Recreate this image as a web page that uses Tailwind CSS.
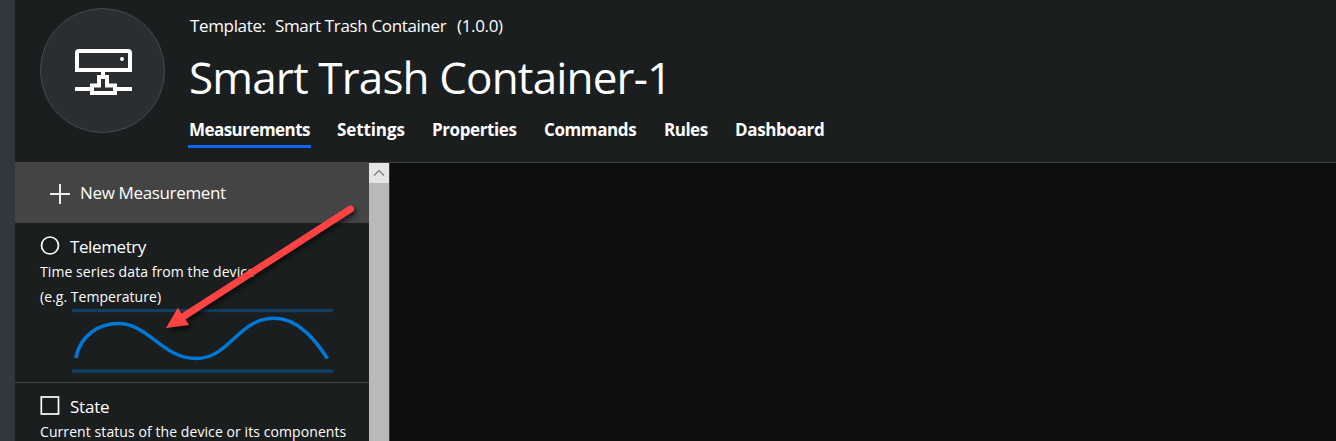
<!DOCTYPE html>
<html lang="en">
<head>
<meta charset="utf-8">
<title>Smart Trash Container-1</title>
<script src="https://cdn.jsdelivr.net/npm/@tailwindcss/browser@4"></script>
</head>
<body class="w-[1336px] h-[441px] overflow-hidden bg-[#1a1e1f] text-white font-['Open_Sans','Noto_Sans',sans-serif]">
<div class="relative flex w-[1336px] h-[441px] overflow-hidden">
  <div class="w-[15px] shrink-0 bg-[#31373f]"></div>
  <div class="flex flex-col flex-1">
    <header class="flex h-[163px] shrink-0 border-b border-[#444] pl-[25px] pt-2">
      <div class="flex size-[125px] shrink-0 rounded-full border border-[#4a4a4a] bg-[#2b2e30]">
        <svg class="mt-[36px] ml-[31px]" width="62" height="54" viewBox="72 45 62 54" fill="none" stroke="#fff" stroke-width="4">
          <path d="M77 70V53Q77 51 79 51H128Q130 51 130 53V70Z"/>
          <path d="M75 89H92M115 89H132M103 71V77"/>
          <path d="M92 93V85.500H99V77H107V85.500H115V93Z"/>
          <circle cx="122" cy="59" r="2" fill="#fff" stroke="none"/>
        </svg>
      </div>
      <div class="flex flex-col ml-[24px] whitespace-nowrap">
        <div class="flex h-6 mt-[6px] text-[17px] leading-6 tracking-[-0.35px]">
          <span class="w-[85px] pl-px">Template:</span><span class="w-[183px] pl-px">Smart Trash Container</span><span>(1.0.0)</span>
        </div>
        <h1 class="mt-[9px] h-[60px] text-[44px] leading-[60px] font-normal tracking-[-0.85px]">Smart Trash Container-1</h1>
        <nav class="flex mt-[9px] h-[32px] text-[17px] leading-[28px] font-bold tracking-[-0.5px]">
          <span class="-ml-px w-[123px] h-[32px] mr-[26px] pl-px border-b-[3px] border-[#1264ff] tracking-[-0.55px]">Measurements</span>
          <span class="w-[95px] tracking-[-0.1px]">Settings</span>
          <span class="w-[112px] tracking-[-0.4px]">Properties</span>
          <span class="w-[120px] tracking-[-0.4px]">Commands</span>
          <span class="w-[71px]">Rules</span>
          <span class="tracking-[-0.35px]">Dashboard</span>
        </nav>
      </div>
    </header>
    <div class="flex flex-1 min-h-0">
      <aside class="w-[354px] shrink-0 whitespace-nowrap">
        <div class="flex h-[60px] bg-[#444] pl-[35px] text-[17px] leading-[60px] tracking-[-0.35px]">
          <svg class="mt-[21px] mr-[10px]" width="20" height="20" stroke="#eee" stroke-width="2"><path d="M10 0V20M0 10H20"/></svg>
          <span>New Measurement</span>
        </div>
        <section class="h-[160px] border-b border-[#444] pl-[25px] pt-3">
          <div class="flex h-6 text-[17px] leading-6 tracking-[-0.4px]">
            <svg class="mt-px mr-[10px]" width="20" height="20" fill="none" stroke="#fff" stroke-width="1.700"><circle cx="10" cy="9.500" r="8.500"/></svg>
            <span>Telemetry</span>
          </div>
          <p class="text-[14px] leading-[25px] tracking-[0.08px]">Time series data from the device</p>
          <p class="text-[14px] leading-[25px] tracking-[0.04px]">(e.g. Temperature)</p>
          <svg class="ml-[30px]" width="266" height="70" viewBox="70 309 266 70" fill="none">
            <path d="M72 310.500H333M72 371H333" stroke="#123f61" stroke-width="3.300"/>
            <path d="M75.700 358C81 334 100 323.500 118 323.500C149 323.500 162 358.500 196 358.500C230 358.500 238 318.300 274 318.300C299 318.300 316 341 327.500 358.500" stroke="#0078d7" stroke-width="3.500"/>
          </svg>
        </section>
        <section class="pl-[25px] pt-3">
          <div class="flex h-6 text-[17px] leading-6 tracking-[-0.2px]">
            <svg class="mt-px mr-[10px]" width="20" height="20" fill="none" stroke="#fff" stroke-width="1.700"><rect x="1.300" y="1" width="17.200" height="17"/></svg>
            <span>State</span>
          </div>
          <p class="text-[14px] leading-[25px] tracking-[0.08px]">Current status of the device or its components</p>
        </section>
      </aside>
      <div class="w-[20px] shrink-0 bg-[#b9b9b9]">
        <div class="h-[20px] bg-[#e6e6e6]">
          <svg width="20" height="20" fill="none" stroke="#777" stroke-width="1.100"><path d="M5 12.500L10 7.500L15 12.500"/></svg>
        </div>
      </div>
      <main class="flex-1 bg-[#0d0e10] border-l border-[#3a3a3a]"></main>
    </div>
  </div>
  <svg class="absolute left-[155px] top-[195px] drop-shadow-[2px_3px_2px_rgba(0,0,0,0.6)]" width="215" height="145" viewBox="155 195 215 145">
    <path d="M350.500 209L182 317.500" stroke="#ff4343" stroke-width="7" stroke-linecap="round"/>
    <path d="M166 328L177.800 307.800L189.200 325Z" fill="#ff4343"/>
  </svg>
</div>
</body>
</html>
